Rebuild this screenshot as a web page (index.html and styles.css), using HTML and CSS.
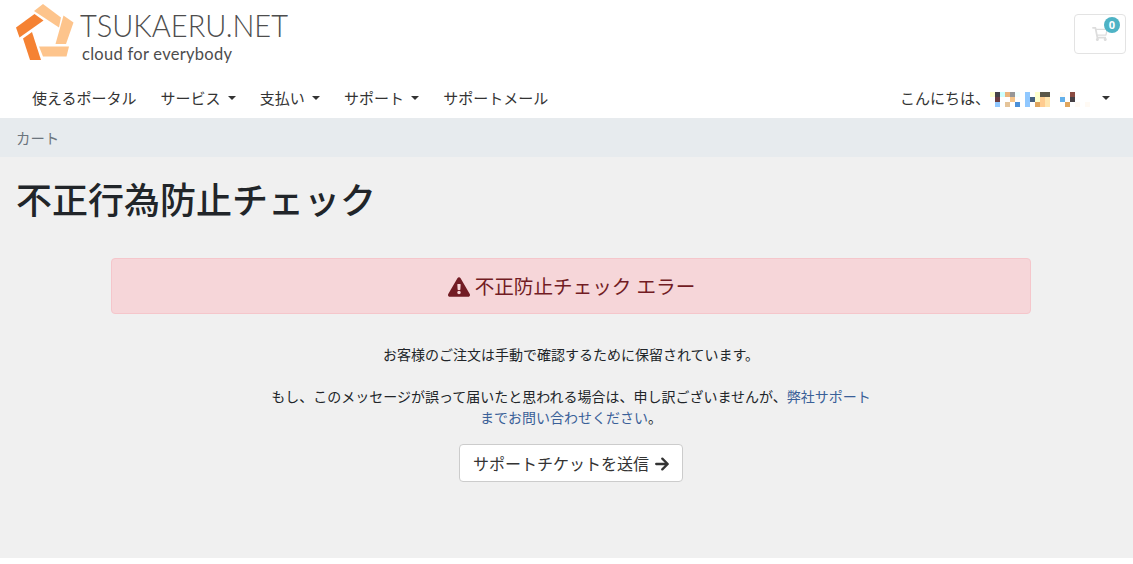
FILE: index.html
```
<!DOCTYPE html>
<html lang="ja">
<head>
  <meta charset="UTF-8">
  <meta name="viewport" content="width=device-width, initial-scale=1.0">
  <title>カート - TSUKAERU.NET</title>
  <link rel="stylesheet" href="styles.css">
</head>
<body>
  <header class="header">
    <div class="topbar">
      <a href="#" class="logo">
        <svg width="300" height="70" viewBox="0 0 300 70">
          <g fill="#fdc48c">
            <path d="M43 4L61 17.5L59 27.5L34 11Z"/>
            <path d="M63.500 15.500L73.500 22.500L66 44H55.500Z"/>
            <path d="M39 46.500H69L66.500 56.500H43Z"/>
          </g>
          <g fill="#f58233">
            <path d="M34.500 14L43.500 20.500L19.500 37.500L16 27.500Z"/>
            <path d="M32 32L41 60H30L23 38.500Z"/>
          </g>
          <text class="logo-name" x="80" y="37" textLength="208" lengthAdjust="spacingAndGlyphs">TSUKAERU.NET</text>
          <text class="logo-tagline" x="82" y="60" textLength="150" lengthAdjust="spacing">cloud for everybody</text>
        </svg>
      </a>
      <a href="#" class="cart-btn">
        <svg width="16" height="14" viewBox="0 0 576 512" fill="#ddd">
          <path d="M528.100 301.300l47.300-208C578.800 78.300 567.400 64 552 64H159.200l-9.200-44.800C147.800 8 137.900 0 126.500 0H24C10.700 0 0 10.700 0 24v16c0 13.300 10.700 24 24 24h69.900l70.200 343.400C147.300 417.100 136 435.200 136 456c0 30.900 25.100 56 56 56s56-25.100 56-56c0-15.700-6.400-29.800-16.800-40h209.600C430.400 426.200 424 440.300 424 456c0 30.900 25.100 56 56 56s56-25.100 56-56c0-22.200-12.900-41.300-31.600-50.400l5.500-24.300c3.400-15-8-29.300-23.400-29.300H218.100l-6.500-32h293.100c11.200 0 20.900-7.800 23.400-18.700zM170 112h350l-36 160H202z"/>
        </svg>
        <span class="badge">0</span>
      </a>
    </div>
    <nav class="navbar">
      <ul class="nav">
        <li><a href="#">使えるポータル</a></li>
        <li><a href="#" class="dropdown">サービス</a></li>
        <li><a href="#" class="dropdown">支払い</a></li>
        <li><a href="#" class="dropdown">サポート</a></li>
        <li><a href="#">サポートメール</a></li>
      </ul>
      <a href="#" class="account dropdown">
        <span>こんにちは、</span>
        <svg class="user-name" width="100" height="15" viewBox="0 0 20 3" shape-rendering="crispEdges">
          <path fill="#ffffcc" d="M0 0h1v1h-1zM9 0h1v2h-1z"/>
          <path fill="#464146" d="M1 0h1v1h-1zM16 1h1v1h-1z"/>
          <path fill="#ccffff" d="M2 0h1v1h-1z"/>
          <path fill="#eab57e" d="M3 0h1v1h-1z"/>
          <path fill="#969696" d="M4 0h1v1h-1z"/>
          <path fill="#f0ffff" d="M5 0h1v1h-1z"/>
          <path fill="#6b3d40" d="M1 1h1v1h-1z"/>
          <path fill="#f5c58a" d="M4 1h1v1h-1z"/>
          <path fill="#90c8ff" d="M1 2h1v1h-1zM7 0h1v3h-1z"/>
          <path fill="#e5c499" d="M3 2h1v1h-1z"/>
          <path fill="#4a90d9" d="M5 2h1v1h-1z"/>
          <path fill="#46607f" d="M8 1h1v1h-1z"/>
          <path fill="#5b5749" d="M10 0h2v1h-2z"/>
          <path fill="#ffcc90" d="M10 1h1v2h-1z"/>
          <path fill="#ffe6b0" d="M11 1h1v2h-1z"/>
          <path fill="#e0a55c" d="M9 2h1v1h-1zM15 2h1v1h-1z"/>
          <path fill="#64b0ea" d="M14 1h1v1h-1z"/>
          <path fill="#8a4b42" d="M16 0h1v1h-1z"/>
          <path fill="#fffaf4" d="M14 0h1v1h-1zM17 2h1v1h-1zM19 2h1v1h-1z"/>
        </svg>
      </a>
    </nav>
  </header>

  <div class="breadcrumb">カート</div>

  <main class="main">
    <h1>不正行為防止チェック</h1>
    <div class="content">
      <div class="alert">
        <svg width="22" height="20" viewBox="0 0 576 512" fill="#721c24">
          <path d="M569.500 440c18.500 32-4.700 72-41.600 72H48.100c-36.900 0-60-40.100-41.600-72L246.400 24c18.500-32 64.700-32 83.200 0zM288 354a46 46 0 1 0 0 92 46 46 0 0 0 0-92zm-43.700-165.300l7.400 136c.3 6.400 5.600 11.300 12 11.300h48.500c6.400 0 11.600-5 12-11.300l7.400-136c.4-6.900-5.100-12.700-12-12.700h-63.400c-6.900 0-12.300 5.800-11.900 12.700z"/>
        </svg>
        <span>不正防止チェック エラー</span>
      </div>
      <div class="message">
        <p>お客様のご注文は手動で確認するために保留されています。</p>
        <p>もし、このメッセージが誤って届いたと思われる場合は、申し訳ございませんが、<a href="#">弊社サポートまでお問い合わせください</a>。</p>
      </div>
      <a href="#" class="btn">
        サポートチケットを送信
        <svg width="14" height="16" viewBox="0 0 14 16" fill="none" stroke="#333" stroke-width="2.300" stroke-linecap="round" stroke-linejoin="round">
          <path d="M1.200 8H12.500M7.300 2.600L12.700 8L7.300 13.400"/>
        </svg>
      </a>
    </div>
  </main>
</body>
</html>
```

FILE: styles.css
```
* {
  box-sizing: border-box;
}

body {
  font-family: "Open Sans", "Noto Sans CJK JP", sans-serif;
  font-size: 16px;
  line-height: 1.5;
  color: #212529;
  background-color: #fff;
  margin: 0;
}

a {
  color: #3a6098;
  text-decoration: none;
}

.topbar {
  display: flex;
  justify-content: space-between;
  align-items: flex-start;
  height: 78px;
}

.logo svg {
  display: block;
}

.logo text {
  font-family: Lato, sans-serif;
  fill: #4d4d4d;
}

.logo .logo-name {
  font-size: 32px;
  font-weight: 300;
}

.logo .logo-tagline {
  font-size: 16.5px;
}

.cart-btn {
  position: relative;
  display: flex;
  align-items: center;
  justify-content: center;
  width: 52px;
  height: 40px;
  margin: 14px 7px 0 0;
  border: 1px solid #e3e3e3;
  border-radius: 4px;
}

.badge {
  position: absolute;
  top: 2px;
  right: 5px;
  width: 16px;
  height: 16px;
  border-radius: 50%;
  background-color: #4eb3c5;
  color: #fff;
  font-size: 11px;
  font-weight: bold;
  line-height: 16px;
  text-align: center;
}

.navbar {
  display: flex;
  justify-content: space-between;
  align-items: center;
  height: 40px;
  padding: 0 23px 0 32px;
  font-size: 15px;
}

.navbar a {
  display: flex;
  align-items: center;
  color: #333;
}

.nav {
  display: flex;
  gap: 24px;
  margin: 0;
  padding: 0;
  list-style: none;
}

.dropdown::after {
  content: "";
  margin-left: 7.2px;
  border-top: 4px solid #333;
  border-right: 4px solid transparent;
  border-left: 4px solid transparent;
}

.account .user-name {
  margin-top: 3px;
}

.account.dropdown::after {
  margin-left: 12px;
}

.breadcrumb {
  height: 39px;
  padding: 1px 0 0 16px;
  background-color: #e7ebee;
  color: #6c757d;
  font-size: 14.4px;
  line-height: 39px;
}

.main {
  height: 401px;
  padding: 22px 16px 0;
  background-color: #f0f0f0;
}

h1 {
  margin: 0;
  font-size: 36px;
  font-weight: 500;
  line-height: 43px;
}

.content {
  display: flex;
  flex-direction: column;
  align-items: center;
  width: 1110px;
  margin-top: 36px;
}

.alert {
  display: flex;
  align-items: center;
  justify-content: center;
  gap: 5px;
  width: 920px;
  height: 56px;
  padding: 2px 0 0 1px;
  border: 1px solid #f5c6cb;
  border-radius: 4px;
  background-color: #f6d6d9;
  color: #721c24;
  font-size: 19.6px;
}

.message {
  width: 613px;
  margin-top: 30px;
  font-size: 14px;
  line-height: 21px;
  text-align: center;
}

.message p {
  margin: 0 0 21px;
}

.message p:last-child {
  margin-bottom: 16px;
}

.btn {
  display: flex;
  align-items: center;
  justify-content: center;
  gap: 6px;
  width: 224px;
  height: 38px;
  padding-top: 2px;
  border: 1px solid #ccc;
  border-radius: 4px;
  background-color: #fff;
  color: #333;
}
```
